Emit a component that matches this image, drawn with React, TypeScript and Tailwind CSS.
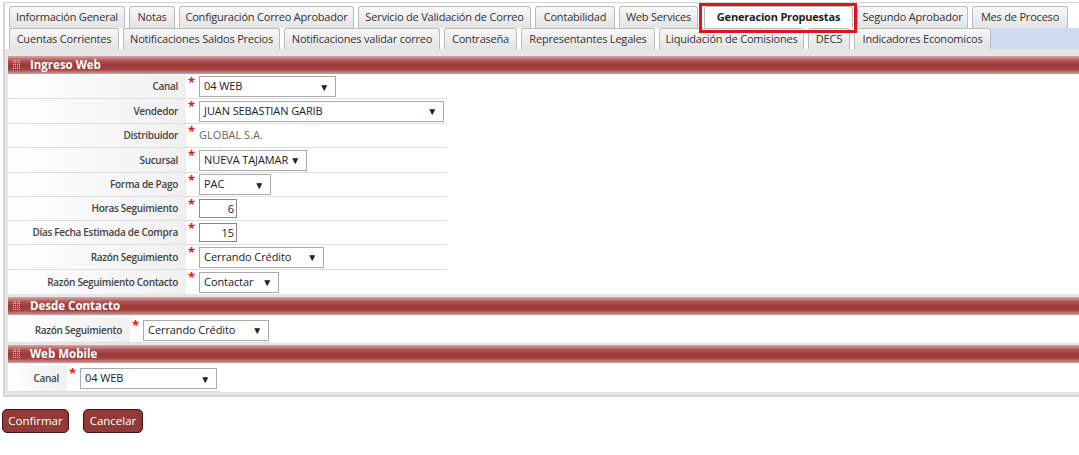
import React from 'react'

const font = 'font-["Open_Sans",sans-serif]'

// tab label + outer width, as measured from the screen
const row1: [string, number][] = [
  ['Información General', 116],
  ['Notas', 46],
  ['Configuración Correo Aprobador', 175],
  ['Servicio de Validación de Correo', 173],
  ['Contabilidad', 80],
  ['Web Services', 79],
  ['Generacion Propuestas', 149],
  ['Segundo Aprobador', 111],
  ['Mes de Proceso', 96],
]

const row2: [string, number][] = [
  ['Cuentas Corrientes', 110],
  ['Notificaciones Saldos Precios', 157],
  ['Notificaciones validar correo', 156],
  ['Contraseña', 73],
  ['Representantes Legales', 134],
  ['Liquidación de Comisiones', 145],
  ['DEC5', 42],
  ['Indicadores Economicos', 137],
]

function Tab({ label, width, active, h }: { label: string; width: number; active?: boolean; h: number }) {
  return (
    <div
      className={`relative mr-[4px] shrink-0 whitespace-nowrap rounded-t-[3px] border border-b-0 border-[#bbb] text-center text-[11px] tracking-[-0.2px] ${
        active ? 'z-10 bg-white font-bold text-[#222]' : 'bg-[linear-gradient(to_bottom,#f8f8f8,#e3e3e3)] text-[#333]'
      }`}
      style={{ width, height: h, lineHeight: `${h - 2}px`, marginLeft: active ? 2 : 0 }}
    >
      {label}
      {active && (
        <div className="pointer-events-none absolute -bottom-[5px] -left-[6px] -right-[5px] -top-[4px] border-[3px] border-[#e0141b]" />
      )}
    </div>
  )
}

function GridIcon() {
  const dots = []
  for (let r = 0; r < 5; r++) {
    for (let c = 0; c < 4; c++) {
      dots.push(<rect key={`${r}-${c}`} x={c * 2} y={r * 2} width="1" height="1" fill="#f3dcdc" />)
    }
  }
  return (
    <svg width="8" height="10" viewBox="0 0 8 10" className="ml-[5px] mr-[9px]">
      {dots}
    </svg>
  )
}

function Header({ title }: { title: string }) {
  return (
    <div className="flex h-[18px] items-center bg-[linear-gradient(to_bottom,#d9a7a7_0%,#b35757_25%,#9b3737_50%,#a64444_75%,#d1a0a0_100%)]">
      <GridIcon />
      <span className="whitespace-nowrap text-[11.5px] font-bold text-white">{title}</span>
    </div>
  )
}

function Select({ value, width }: { value: string; width: number }) {
  return (
    <div
      className="flex h-[21px] shrink-0 items-center justify-between whitespace-nowrap border border-[#a9a9a9] bg-white pl-[4px] pr-[6px] text-[11px] tracking-[-0.1px] text-[#222]"
      style={{ width }}
    >
      <span>{value}</span>
      <span className="text-[10px] leading-none text-[#222]">▼</span>
    </div>
  )
}

function NumInput({ value }: { value: string }) {
  return (
    <div className="h-[19px] w-[38px] border border-[#8a8a8a] bg-white pr-[2px] text-right text-[11px] leading-[17px] text-[#222]">
      {value}
    </div>
  )
}

function Row({
  label,
  labelW,
  children,
  last,
  h = 24,
}: {
  label: string
  labelW: number
  children: React.ReactNode
  last?: boolean
  h?: number
}) {
  return (
    <div className={`flex items-stretch ${last ? '' : 'border-b border-[#dedede]'}`} style={{ height: h }}>
      <div
        className="flex shrink-0 items-center justify-end whitespace-nowrap bg-[linear-gradient(to_right,#ffffff,#f0f0f0)] pr-[8px] text-[10px] font-semibold tracking-[-0.3px] text-[#444]"
        style={{ width: labelW }}
      >
        {label}
      </div>
      <div className="flex items-center pl-[2px] pr-[3px]">
        <span className="mr-[4px] self-start pt-[1px] text-[13px] font-bold leading-[12px] text-[#d81b1b]">*</span>
        {children}
      </div>
    </div>
  )
}

export default function App() {
  return (
    <div className={`${font} h-[455px] w-[1079px] overflow-hidden bg-white`}>
      <div className="ml-[3px] mt-[2px] border-b-2 border-l-2 border-t border-[#d4d4d4]">
        <div className="pl-[4px] pt-[3px]">
          <div className="flex items-end">
            {row1.map(([t, w]) => (
              <Tab key={t} label={t} width={w} h={22} active={t === 'Generacion Propuestas'} />
            ))}
          </div>
          <div className="flex items-end bg-[linear-gradient(to_right,transparent_981px,#cfdcef_981px)]">
            {row2.map(([t, w]) => (
              <Tab key={t} label={t} width={w} h={21} />
            ))}
          </div>
        </div>
        <div className="bg-[#e6e6e6] pb-[2px] pl-[3px] pt-[7px]">
          <Header title="Ingreso Web" />
          <div className="bg-white pt-[1px]">
            <div className="w-[439px]">
              <Row label="Canal" labelW={178}><Select value="04 WEB" width={137} /></Row>
              <Row label="Vendedor" labelW={178} h={25}><Select value="JUAN SEBASTIAN GARIB" width={245} /></Row>
              <Row label="Distribuidor" labelW={178}>
                <span className="whitespace-nowrap text-[11px] text-[#666]">GLOBAL S.A.</span>
              </Row>
              <Row label="Sucursal" labelW={178} h={25}><Select value="NUEVA TAJAMAR" width={108} /></Row>
              <Row label="Forma de Pago" labelW={178}><Select value="PAC" width={72} /></Row>
              <Row label="Horas Seguimiento" labelW={178}><NumInput value="6" /></Row>
              <Row label="Días Fecha Estimada de Compra" labelW={178}><NumInput value="15" /></Row>
              <Row label="Razón Seguimiento" labelW={178} h={25}><Select value="Cerrando Crédito" width={125} /></Row>
              <Row label="Razón Seguimiento Contacto" labelW={178} last><Select value="Contactar" width={80} /></Row>
            </div>
          </div>
          <div className="h-[3px]" />
          <Header title="Desde Contacto" />
          <div className="bg-white">
            <div className="w-[262px] border-b border-[#dedede] pt-[3px]">
              <Row label="Razón Seguimiento" labelW={122} last h={24}><Select value="Cerrando Crédito" width={126} /></Row>
            </div>
          </div>
          <div className="h-[2px]" />
          <Header title="Web Mobile" />
          <div className="bg-white">
            <div className="w-[212px] border-b border-[#dedede] pt-[3px]">
              <Row label="Canal" labelW={59} last h={25}><Select value="04 WEB" width={137} /></Row>
            </div>
          </div>
          <div className="h-[1px]" />
        </div>
      </div>
      <div className="mt-[12px] flex gap-[14px] pl-[2px]">
        <button className="h-[24px] w-[67px] rounded-[5px] border border-[#3d1515] bg-[#933a38] text-[11.5px] text-white">
          Confirmar
        </button>
        <button className="h-[24px] w-[60px] rounded-[5px] border border-[#3d1515] bg-[#933a38] text-[11.5px] text-white">
          Cancelar
        </button>
      </div>
    </div>
  )
}
